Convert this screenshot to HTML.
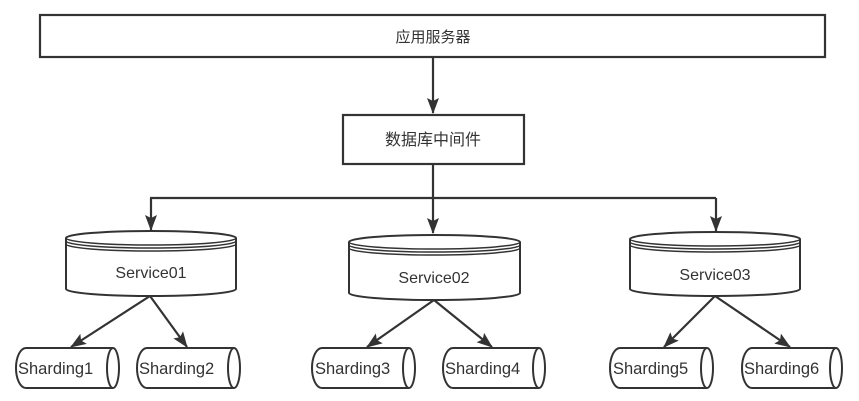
<!DOCTYPE html>
<html><head><meta charset="utf-8"><style>
html,body{margin:0;padding:0;background:#fff;}
svg{display:block;}
text{font-family:"Liberation Sans","Noto Sans CJK SC",sans-serif;fill:#333;}
</style></head><body>
<svg width="859" height="401" viewBox="0 0 859 401" xmlns="http://www.w3.org/2000/svg">
<defs>
<marker id="ah" markerWidth="16" markerHeight="12" refX="15" refY="6" orient="auto" markerUnits="userSpaceOnUse" viewBox="0 0 16 12">
<path d="M0,0 L16,6 L0,12 L3,6 Z" fill="#333"/>
</marker>
</defs>
<g stroke="#333" stroke-width="2.2" fill="#fff">
<rect x="40" y="15" width="785" height="42"/>
<rect x="343" y="115" width="181" height="49"/>
</g>
<text x="433" y="42" font-size="15" text-anchor="middle">应用服务器</text>
<text x="433" y="145" font-size="16" text-anchor="middle">数据库中间件</text>
<g stroke="#333" stroke-width="2.2" fill="none">
<path d="M433,57 V113" marker-end="url(#ah)"/>
<path d="M433,164 V233" marker-end="url(#ah)"/>
<path d="M150,198 H716"/>
<path d="M151,198 V230" marker-end="url(#ah)"/>
<path d="M716,198 V231" marker-end="url(#ah)"/>
<path d="M150,296 L71,347" marker-end="url(#ah)"/>
<path d="M150,296 L187,347" marker-end="url(#ah)"/>
<path d="M434,300 L367,347" marker-end="url(#ah)"/>
<path d="M434,300 L492,347" marker-end="url(#ah)"/>
<path d="M715,296 L664,347" marker-end="url(#ah)"/>
<path d="M715,296 L790,347" marker-end="url(#ah)"/>
</g>
<g stroke="#333" stroke-width="2" fill="#fff">
<path d="M66,238 A85,7 0 0 1 236,238 V289 A85,7 0 0 1 66,289 Z"/>
<path d="M66,238 A85,7 0 0 0 236,238 M66,241 A85,7 0 0 0 236,241 M66,244 A85,7 0 0 0 236,244" fill="none" stroke-width="1.5"/>
<path d="M349,242 A85.5,7 0 0 1 520,242 V293 A85.5,7 0 0 1 349,293 Z"/>
<path d="M349,242 A85.5,7 0 0 0 520,242 M349,245 A85.5,7 0 0 0 520,245 M349,248 A85.5,7 0 0 0 520,248" fill="none" stroke-width="1.5"/>
<path d="M630,239 A85,7 0 0 1 800,239 V289 A85,7 0 0 1 630,289 Z"/>
<path d="M630,239 A85,7 0 0 0 800,239 M630,242 A85,7 0 0 0 800,242 M630,245 A85,7 0 0 0 800,245" fill="none" stroke-width="1.5"/>
</g>
<text x="151" y="278" font-size="16" text-anchor="middle">Service01</text>
<text x="434" y="283" font-size="16" text-anchor="middle">Service02</text>
<text x="715" y="280" font-size="16" text-anchor="middle">Service03</text>
<g stroke="#333" stroke-width="2" fill="#fff">
<path d="M26,348 H113 A6,20 0 0 1 113,388 H26 A10,20 0 0 1 26,348 Z"/><path d="M113,348 A6,20 0 0 0 113,388" fill="none"/>
<path d="M147,348 H234 A6,20 0 0 1 234,388 H147 A10,20 0 0 1 147,348 Z"/><path d="M234,348 A6,20 0 0 0 234,388" fill="none"/>
<path d="M322,348 H409 A6,20 0 0 1 409,388 H322 A10,20 0 0 1 322,348 Z"/><path d="M409,348 A6,20 0 0 0 409,388" fill="none"/>
<path d="M453,348 H539 A6,20 0 0 1 539,388 H453 A10,20 0 0 1 453,348 Z"/><path d="M539,348 A6,20 0 0 0 539,388" fill="none"/>
<path d="M620,348 H707 A6,20 0 0 1 707,388 H620 A10,20 0 0 1 620,348 Z"/><path d="M707,348 A6,20 0 0 0 707,388" fill="none"/>
<path d="M752,348 H836 A6,20 0 0 1 836,388 H752 A10,20 0 0 1 752,348 Z"/><path d="M836,348 A6,20 0 0 0 836,388" fill="none"/>
</g>
<g font-size="16.5">
<text x="18" y="374">Sharding1</text>
<text x="139" y="374">Sharding2</text>
<text x="315" y="374">Sharding3</text>
<text x="445" y="374">Sharding4</text>
<text x="613" y="374">Sharding5</text>
<text x="744" y="374">Sharding6</text>
</g>
</svg>
</body></html>
